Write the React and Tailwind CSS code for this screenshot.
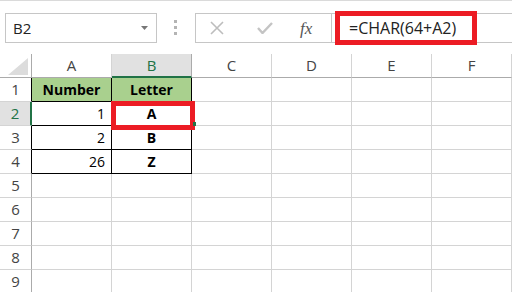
import React from "react";

const cols = ["A", "B", "C", "D", "E", "F"];

const tableRows = {
  1: [
    { text: "Number", cls: "bg-[#a9d08e] font-bold text-center" },
    { text: "Letter", cls: "bg-[#a9d08e] font-bold text-center" },
  ],
  2: [
    { text: "1", cls: "text-right pr-[6px]" },
    { text: "A", cls: "font-bold text-center" },
  ],
  3: [
    { text: "2", cls: "text-right pr-[6px]" },
    { text: "B", cls: "font-bold text-center" },
  ],
  4: [
    { text: "26", cls: "text-right pr-[6px]" },
    { text: "Z", cls: "font-bold text-center" },
  ],
};

function Toolbar() {
  return (
    <div className="flex h-[54px] items-start border-t border-[#dadada] pt-[12px] font-['Open_Sans',sans-serif]">
      <div className="ml-[5px] flex h-[30px] w-[152px] items-center justify-between border border-[#c6c6c6] pl-[7px] pr-[8px] text-[15px] text-[#222]">
        <span>B2</span>
        <svg width="7" height="4" viewBox="0 0 7 4">
          <path d="M0 0h7L3.5 4z" fill="#777" />
        </svg>
      </div>
      <div className="ml-[17px] mt-[7px] flex w-[4px] flex-col gap-[3px]">
        <span className="h-[3px] w-[3px] bg-[#b4b4b4]" />
        <span className="h-[3px] w-[3px] bg-[#b4b4b4]" />
        <span className="h-[3px] w-[3px] bg-[#b4b4b4]" />
      </div>
      <div className="ml-[17px] flex h-[30px] w-[137px] items-center border border-[#c6c6c6]">
        <svg className="ml-[14px]" width="14" height="14" viewBox="0 0 14 14">
          <path d="M1 1l12 12M13 1L1 13" stroke="#bdbdbd" strokeWidth="1.6" />
        </svg>
        <svg className="ml-[33px]" width="16" height="12" viewBox="0 0 16 12">
          <path d="M1 6l4.5 5L15 1" stroke="#c4c4c4" strokeWidth="2.4" fill="none" />
        </svg>
        <span className="ml-[27px] font-['Liberation_Serif',serif] text-[17px] italic leading-none text-[#555]">
          fx
        </span>
      </div>
      <div className="relative flex h-[30px] flex-1 items-center border-y border-[#c6c6c6]">
        <div className="absolute left-[3px] top-[-3px] h-[34px] w-[142px] border-[5px] border-[#ec1c24]" />
        <span className="ml-[17px] text-[16px] text-[#222]">=CHAR(64+A2)</span>
      </div>
    </div>
  );
}

function Sheet() {
  const rows = [1, 2, 3, 4, 5, 6, 7, 8, 9];
  return (
    <div className="relative grid grid-cols-[32px_repeat(6,80px)] auto-rows-[24px]">
      <div className="flex items-end justify-end border-r border-b border-[#ababab] pb-[2px] pr-[3px]">
        <svg width="20" height="17" viewBox="0 0 20 17">
          <path d="M20 0V17H0z" fill="#dcdcdc" />
        </svg>
      </div>
      {cols.map((c) => (
        <div
          key={c}
          className={
            c === "B"
              ? "flex items-center justify-center border-r border-b-2 border-r-[#ababab] border-b-[#217346] bg-[#e1e1e1] font-['Open_Sans',sans-serif] text-[15px] text-[#217346]"
              : "flex items-center justify-center border-r border-b border-[#ababab] border-r-[#d4d4d4] font-['Open_Sans',sans-serif] text-[15px] text-[#444]"
          }
        >
          {c}
        </div>
      ))}
      {rows.map((r) => (
        <React.Fragment key={r}>
          <div
            className={
              r === 2
                ? "flex items-center justify-center border-r-2 border-b border-r-[#217346] border-b-[#d4d4d4] bg-[#e1e1e1] font-['Open_Sans',sans-serif] text-[15px] text-[#217346]"
                : r <= 4
                  ? "flex items-center justify-center border-r border-b border-r-[#000] border-b-[#d4d4d4] font-['Open_Sans',sans-serif] text-[15px] text-[#444]"
                  : "flex items-center justify-center border-r border-b border-r-[#ababab] border-b-[#d4d4d4] font-['Open_Sans',sans-serif] text-[15px] text-[#444]"
            }
          >
            {r}
          </div>
          {cols.map((c, i) => {
            const cell = tableRows[r] && i < 2 ? tableRows[r][i] : null;
            if (cell) {
              return (
                <div
                  key={c}
                  className={`border-r border-b border-black font-['Open_Sans',sans-serif] text-[14px] leading-[24px] text-black ${cell.cls}`}
                >
                  {cell.text}
                </div>
              );
            }
            return <div key={c} className="border-r border-b border-[#d4d4d4]" />;
          })}
        </React.Fragment>
      ))}
      <div className="absolute left-[111px] top-[47px] h-[29px] w-[84px] border-[5px] border-[#ec1c24]" />
      <div className="absolute left-[193px] top-[68px] h-[4px] w-[3px] bg-[#217346]" />
    </div>
  );
}

export default function App() {
  return (
    <div className="h-[292px] w-[512px] overflow-hidden bg-white">
      <Toolbar />
      <Sheet />
    </div>
  );
}
